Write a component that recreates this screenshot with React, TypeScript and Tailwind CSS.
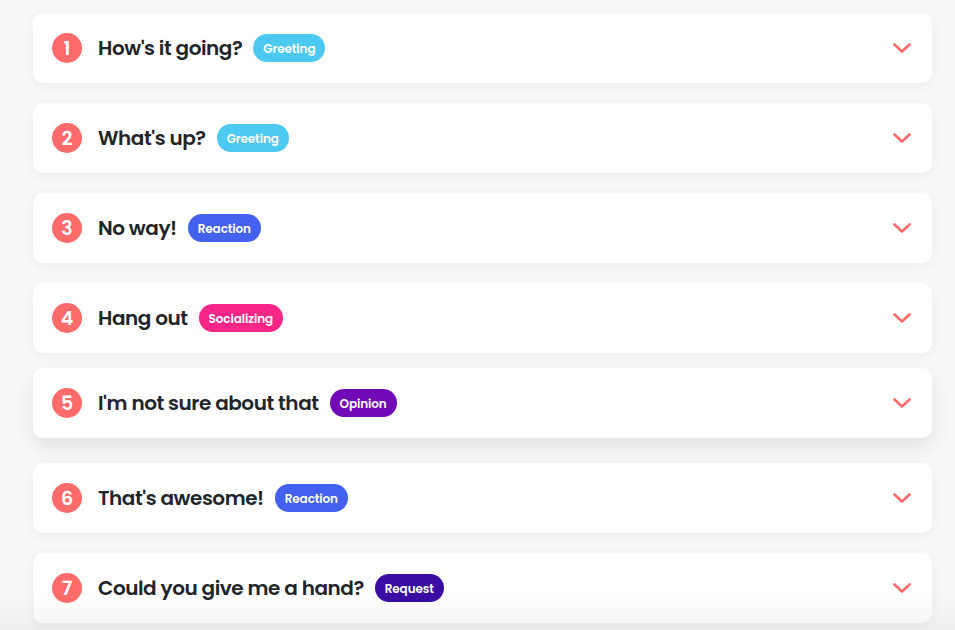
import React from "react";

type Item = { n: number; title: string; tag: string; color: string; hover?: boolean };

const items: Item[] = [
  { n: 1, title: "How's it going?", tag: "Greeting", color: "bg-[#4cc9f0]" },
  { n: 2, title: "What's up?", tag: "Greeting", color: "bg-[#4cc9f0]" },
  { n: 3, title: "No way!", tag: "Reaction", color: "bg-[#4361ee]" },
  { n: 4, title: "Hang out", tag: "Socializing", color: "bg-[#f72585]" },
  { n: 5, title: "I'm not sure about that", tag: "Opinion", color: "bg-[#7209b7]", hover: true },
  { n: 6, title: "That's awesome!", tag: "Reaction", color: "bg-[#4361ee]" },
  { n: 7, title: "Could you give me a hand?", tag: "Request", color: "bg-[#3a0ca3]" },
];

function Chevron() {
  return (
    <svg width="18" height="10" viewBox="0 0 18 10" fill="none">
      <polyline points="1.5,1.5 9,8.5 16.5,1.5" stroke="#ff6b6b" strokeWidth="2.6" strokeLinecap="round" strokeLinejoin="round" />
    </svg>
  );
}

export default function App() {
  return (
    <div
      className="relative min-h-[630px] h-[630px] overflow-hidden bg-[#f7f8fa] px-[33px] pt-[13px]"
      style={{ fontFamily: "Poppins, 'Open Sans', Inter, sans-serif" }}
    >
      <div className="flex flex-col gap-5 w-[899px]">
        {items.map((it) => (
          <div
            key={it.n}
            className={
              it.hover
                ? "flex h-[70px] items-center rounded-[10px] bg-white pl-[19px] pr-[21px] -mt-[5px] mb-[5px] shadow-[0_10px_22px_rgba(0,0,0,0.09)]"
                : "flex h-[70px] items-center rounded-[10px] bg-white pl-[19px] pr-[21px] shadow-[0_3px_12px_rgba(0,0,0,0.05)]"
            }
          >
            <div className="flex h-[30px] w-[30px] shrink-0 items-center justify-center rounded-full bg-[#ff6b6b] pt-[1px] text-[19px] font-semibold text-white leading-none">
              {it.n}
            </div>
            <div className="ml-4 text-[20px] font-semibold tracking-[-0.45px] text-[#212529]">{it.title}</div>
            <div
              className={`ml-[11px] flex h-[28px] items-center rounded-full px-[10px] pt-[1px] text-[12px] font-semibold tracking-[-0.1px] text-white ${it.color}`}
            >
              {it.tag}
            </div>
            <div className="ml-auto flex items-center">
              <Chevron />
            </div>
          </div>
        ))}
      </div>
      <div className="pointer-events-none absolute bottom-0 left-0 right-0 h-[40px] bg-gradient-to-b from-transparent to-[rgba(0,0,0,0.04)]" />
    </div>
  );
}
